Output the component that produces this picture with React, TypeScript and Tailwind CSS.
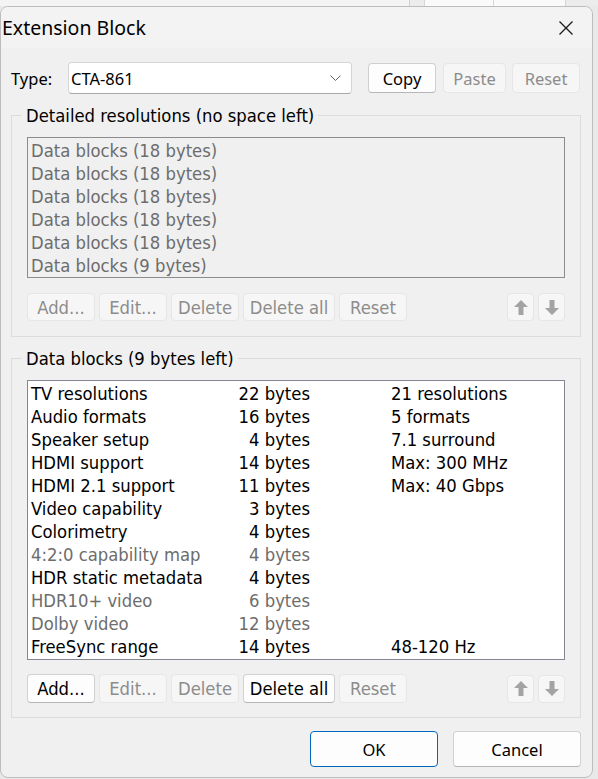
import React from "react";

type BtnProps = { label: string; enabled?: boolean; className?: string };

function Btn({ label, enabled = false, className = "" }: BtnProps) {
  return (
    <div
      className={
        "flex items-center justify-center rounded-[4px] border " +
        (enabled
          ? "bg-[#fdfdfd] border-[#d0d0d0] border-b-[#b5b5b5] text-black "
          : "bg-[#f6f6f6] border-[#e6e6e6] text-[#8c8c8c] ") +
        className
      }
    >
      {label}
    </div>
  );
}

function ArrowBtn({ down = false }: { down?: boolean }) {
  return (
    <div className="flex h-[28px] w-[27px] items-center justify-center rounded-[4px] border border-[#e6e6e6] bg-[#f6f6f6]">
      <svg width="14" height="15" viewBox="0 0 14 15" className={down ? "rotate-180" : ""}>
        <polygon points="7,0 14,7 9.5,7 9.5,15 4.5,15 4.5,7 0,7" fill="#a3a3a3" />
      </svg>
    </div>
  );
}

const blocks: [string, string, string, boolean][] = [
  ["TV resolutions", "22 bytes", "21 resolutions", false],
  ["Audio formats", "16 bytes", "5 formats", false],
  ["Speaker setup", "4 bytes", "7.1 surround", false],
  ["HDMI support", "14 bytes", "Max: 300 MHz", false],
  ["HDMI 2.1 support", "11 bytes", "Max: 40 Gbps", false],
  ["Video capability", "3 bytes", "", false],
  ["Colorimetry", "4 bytes", "", false],
  ["4:2:0 capability map", "4 bytes", "", true],
  ["HDR static metadata", "4 bytes", "", false],
  ["HDR10+ video", "6 bytes", "", true],
  ["Dolby video", "12 bytes", "", true],
  ["FreeSync range", "14 bytes", "48-120 Hz", false],
];

const detailed = [
  "Data blocks (18 bytes)",
  "Data blocks (18 bytes)",
  "Data blocks (18 bytes)",
  "Data blocks (18 bytes)",
  "Data blocks (18 bytes)",
  "Data blocks (9 bytes)",
];

export default function App() {
  return (
    <div className="flex h-[779px] w-[598px] flex-col overflow-hidden bg-[#e9e9e9] font-['DejaVu_Sans_Condensed','Liberation_Sans',sans-serif] text-[18.3px] leading-[23px] text-black">
      {/* window behind, top strip */}
      <div className="flex h-[6px] shrink-0 bg-[#f4f4f4]">
        <div className="w-[409px]" />
        <div className="w-[15px] border-l border-[#cfcfcf] bg-[#ececec]" />
        <div className="w-[70px] border-x border-[#d6d6d6] bg-[#fafafa]" />
        <div className="w-[72px] border-r border-[#d6d6d6] bg-[#fafafa]" />
        <div className="flex-1 bg-[#ececec]" />
      </div>

      {/* dialog */}
      <div className="flex h-[772px] w-[593px] shrink-0 flex-col overflow-hidden rounded-[8px] border border-[#bdbdbd] bg-[#f0f0f0]">
        {/* title bar */}
        <div className="flex h-[41px] shrink-0 items-center justify-between bg-[#f3f3f3] pl-[1px] pr-[18px]">
          <span className="font-['Noto_Sans',sans-serif] text-[19.5px] leading-[26px] text-black">Extension Block</span>
          <svg width="16" height="16" viewBox="0 0 16 16">
            <path d="M1.5 1.5 L14.5 14.5 M14.5 1.5 L1.5 14.5" stroke="#1a1a1a" strokeWidth="1.3" />
          </svg>
        </div>

        <div className="flex flex-col pl-[10px] pr-[11px] pt-[14px]">
          {/* type row */}
          <div className="flex h-[32px] items-center font-['Noto_Sans',sans-serif] text-[16.5px]">
            <span className="w-[57px]">Type:</span>
            <div className="flex h-[32px] w-[284px] items-center justify-between rounded-[4px] border border-[#d5d5d5] border-b-[#a8a8a8] bg-white pl-[2px] pr-[10px]">
              <span>CTA-861</span>
              <svg width="11" height="6" viewBox="0 0 11 6">
                <path d="M0.5 0.5 L5.5 5.5 L10.5 0.5" stroke="#606060" strokeWidth="1" fill="none" />
              </svg>
            </div>
            <Btn label="Copy" enabled className="ml-[16px] h-[30px] w-[68px]" />
            <Btn label="Paste" className="ml-[7px] h-[30px] w-[63px]" />
            <Btn label="Reset" className="ml-[6px] h-[30px] w-[68px]" />
          </div>

          {/* detailed resolutions */}
          <fieldset className="mt-[10px] border border-[#dcdcdc] px-[15px] pb-[15px] pt-[10px]">
            <legend className="ml-[-5px] px-[4px]">Detailed resolutions (no space left)</legend>
            <div className="h-[141px] border border-[#8c8c8c] bg-[#f0f0f0] pl-[3px] pt-[1px] text-[#6d6d6d]">
              {detailed.map((d, i) => (
                <div key={i} className="h-[23px]">{d}</div>
              ))}
            </div>
            <div className="mt-[15px] flex items-center">
              <Btn label="Add..." className="h-[28px] w-[68px]" />
              <Btn label="Edit..." className="ml-[4px] h-[28px] w-[68px]" />
              <Btn label="Delete" className="ml-[4px] h-[28px] w-[68px]" />
              <Btn label="Delete all" className="ml-[4px] h-[28px] w-[92px]" />
              <Btn label="Reset" className="ml-[4px] h-[28px] w-[68px]" />
              <div className="flex-1" />
              <ArrowBtn />
              <div className="w-[4px]" />
              <ArrowBtn down />
            </div>
          </fieldset>

          {/* data blocks */}
          <fieldset className="mt-[10px] border border-[#dcdcdc] px-[15px] pb-[14px] pt-[10px]">
            <legend className="ml-[-5px] px-[4px]">Data blocks (9 bytes left)</legend>
            <div className="h-[280px] border border-[#828790] bg-white pl-[3px] pt-[1px]">
              {blocks.map(([name, size, info, gray], i) => (
                <div key={i} className={"flex h-[23px] " + (gray ? "text-[#6d6d6d]" : "text-black")}>
                  <span className="w-[190px]">{name}</span>
                  <span className="w-[89px] text-right">{size}</span>
                  <span className="pl-[81px]">{info}</span>
                </div>
              ))}
            </div>
            <div className="mt-[14px] flex items-center">
              <Btn label="Add..." enabled className="h-[29px] w-[68px]" />
              <Btn label="Edit..." className="ml-[4px] h-[29px] w-[68px]" />
              <Btn label="Delete" className="ml-[4px] h-[29px] w-[68px]" />
              <Btn label="Delete all" enabled className="ml-[4px] h-[29px] w-[92px]" />
              <Btn label="Reset" className="ml-[4px] h-[29px] w-[68px]" />
              <div className="flex-1" />
              <ArrowBtn />
              <div className="w-[4px]" />
              <ArrowBtn down />
            </div>
          </fieldset>

          {/* OK / Cancel */}
          <div className="mt-[13px] flex justify-end font-['Noto_Sans',sans-serif] text-[16.5px]">
            <div className="flex h-[36px] w-[128px] items-center justify-center rounded-[4px] border border-[#0067c0] bg-[#fdfdfd]">OK</div>
            <Btn label="Cancel" enabled className="ml-[15px] h-[36px] w-[128px]" />
          </div>
        </div>
      </div>
    </div>
  );
}
